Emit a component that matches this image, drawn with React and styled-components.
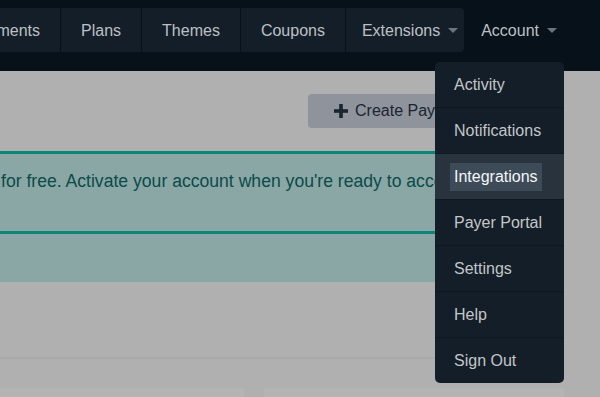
import React from "react";
import styled, { createGlobalStyle } from "styled-components";

const GlobalStyle = createGlobalStyle`
  html, body { margin: 0; padding: 0; }
  body {
    background: #b0b0b1;
    font-family: "Liberation Sans", Arial, Helvetica, sans-serif;
    font-size: 16px;
    overflow: hidden;
  }
`;

const Page = styled.div`
  position: relative;
  width: 600px;
  height: 397px;
  overflow: hidden;
  background: #b0b0b1;
`;

const NavBar = styled.nav`
  height: 71px;
  background: #06111a;
  display: flex;
  justify-content: flex-end;
  align-items: flex-start;
  padding: 8px 43px 0 0;
  box-sizing: border-box;
  overflow: hidden;
  white-space: nowrap;
`;

const TabGroup = styled.div`
  display: flex;
  flex-shrink: 0;
  height: 44px;
  background: #141e28;
  border-radius: 4px;
`;

const Tab = styled.div`
  display: flex;
  align-items: center;
  height: 44px;
  padding: ${(p) => (p.$dropdown ? "0 6px 0 16px" : "0 20px")};
  color: #bcc0c4;
  border-left: ${(p) => (p.$first ? "none" : "1px solid #07111a")};
  flex-shrink: 0;
  padding-top: 1px;
  box-sizing: border-box;
`;

const AccountItem = styled.div`
  display: flex;
  align-items: center;
  height: 44px;
  padding: 1px 0 0 17px;
  box-sizing: border-box;
  color: #bcc0c4;
  flex-shrink: 0;
`;

const Caret = styled.span`
  display: inline-block;
  width: 0;
  height: 0;
  margin-left: 8px;
  border-left: 5.5px solid transparent;
  border-right: 5.5px solid transparent;
  border-top: 5.5px solid #6d747b;
`;

const Main = styled.main`
  display: flex;
  padding-right: 36px;
`;

const Column = styled.div`
  flex: 1;
  min-width: 0;
  display: flex;
  flex-direction: column;
`;

const ButtonRow = styled.div`
  display: flex;
  justify-content: flex-end;
  padding-top: 23px;
`;

const PrimaryButton = styled.button`
  display: flex;
  align-items: center;
  gap: 6px;
  min-width: 256px;
  height: 34px;
  padding: 0 0 0 25px;
  border: none;
  border-radius: 4px;
  background: #8e939c;
  color: #1b2530;
  font-family: inherit;
  font-size: 16px;
  white-space: nowrap;
  overflow: hidden;
`;

const Alert = styled.section`
  margin-top: 23px;
  min-width: 0;
  background: #8aa7a6;
  border-top: 3px solid #0a8578;
`;

const AlertBody = styled.div`
  height: 77px;
  box-sizing: border-box;
  padding: 16px 0 0 1px;
  font-size: 17.6px;
  line-height: 22px;
  color: #0b4b49;
  white-space: nowrap;
  overflow: hidden;
`;

const AlertFooter = styled.div`
  height: 48px;
  border-top: 3px solid #0a8578;
`;

const Rule = styled.hr`
  margin: 75px 0 0;
  border: none;
  border-top: 2px solid #aaaaab;
`;

const Cards = styled.div`
  display: grid;
  grid-template-columns: 244px 1fr;
  gap: 20px;
  margin-top: 29px;
`;

const Card = styled.div`
  height: 60px;
  background: #b4b4b5;
`;

const Dropdown = styled.ul`
  position: absolute;
  left: 435px;
  top: 62px;
  width: 129px;
  margin: 0;
  padding: 0;
  list-style: none;
  background: #131e28;
  border-radius: 5px;
  overflow: hidden;
  z-index: 10;
`;

const MenuItem = styled.li`
  height: 45px;
  display: flex;
  align-items: center;
  padding-left: 15px;
  border-bottom: 1px solid #0d1820;
  background: ${(p) => (p.$active ? "#29333d" : "transparent")};
  &:last-child {
    border-bottom: none;
    height: 45px;
  }
`;

const MenuLabel = styled.span`
  padding: 4px;
  line-height: 20px;
  color: ${(p) => (p.$active ? "#f4f6f8" : "#c3c6c9")};
  background: ${(p) => (p.$active ? "#3d4b58" : "transparent")};
  white-space: nowrap;
`;

const PlusIcon = () => (
  <svg width="16" height="16" viewBox="0 0 16 16" aria-hidden="true">
    <rect x="6.2" y="1" width="3.6" height="14" fill="#1b2530" />
    <rect x="1" y="6.2" width="14" height="3.6" fill="#1b2530" />
  </svg>
);

const tabs = ["Payments", "Plans", "Themes", "Coupons"];
const menu = ["Activity", "Notifications", "Integrations", "Payer Portal", "Settings", "Help", "Sign Out"];

export default function App() {
  return (
    <Page>
      <GlobalStyle />
      <NavBar>
        <TabGroup>
          {tabs.map((t, i) => (
            <Tab key={t} $first={i === 0}>{t}</Tab>
          ))}
          <Tab $dropdown>
            Extensions
            <Caret />
          </Tab>
        </TabGroup>
        <AccountItem>
          Account
          <Caret />
        </AccountItem>
      </NavBar>
      <Main>
        <Column>
          <ButtonRow>
            <PrimaryButton>
              <PlusIcon />
              Create Payment Form
            </PrimaryButton>
          </ButtonRow>
          <Alert>
            <AlertBody>for free. Activate your account when you're ready to accept real payments.</AlertBody>
            <AlertFooter />
          </Alert>
          <Rule />
          <Cards>
            <Card />
            <Card />
          </Cards>
        </Column>
      </Main>
      <Dropdown>
        {menu.map((m) => (
          <MenuItem key={m} $active={m === "Integrations"}>
            <MenuLabel $active={m === "Integrations"}>{m}</MenuLabel>
          </MenuItem>
        ))}
      </Dropdown>
    </Page>
  );
}
